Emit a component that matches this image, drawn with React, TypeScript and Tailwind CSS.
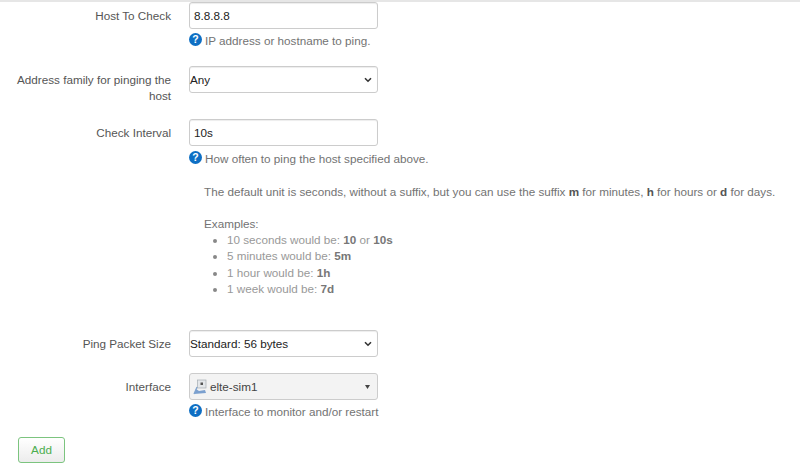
const font = "font-['Liberation_Sans',Arial,sans-serif]";

function Help({ children, className = "" }: { children: React.ReactNode; className?: string }) {
  return (
    <div className={"text-[11.7px] leading-[16.5px] text-[#737373] " + className}>
      <span className="inline-flex align-[-1px] mr-[3px]">
        <svg width="13" height="13" viewBox="0 0 13 13">
          <circle cx="6.5" cy="6.5" r="6.5" fill="#0e6fc4" />
          <text x="6.5" y="10.2" textAnchor="middle" fontSize="10.5" fontWeight="700" fill="#fff" fontFamily="Liberation Sans">?</text>
        </svg>
      </span>
      {children}
    </div>
  );
}

function Label({ children }: { children: React.ReactNode }) {
  return (
    <label className="w-[171px] shrink-0 text-right text-[11.7px] leading-[16.5px] text-[#555] pt-[6px] pl-[10px]">
      {children}
    </label>
  );
}

function TextBox({ value }: { value: string }) {
  return (
    <input
      readOnly
      value={value}
      className="block w-[189px] h-[27px] px-[4px] bg-white border border-[#ccc] rounded-[3px] text-[11.7px] text-[#222] shadow-[inset_0_1px_1px_rgba(0,0,0,0.075)] outline-none"
    />
  );
}

function Select({ value }: { value: string }) {
  return (
    <div className="relative w-[189px] h-[27px] bg-white border border-[#ccc] rounded-[3px] shadow-[inset_0_1px_1px_rgba(0,0,0,0.075)] text-[11.7px] leading-[25px] text-[#222]">
      {value}
      <svg className="absolute right-[5px] top-[10px]" width="8" height="6" viewBox="0 0 8 6" fill="none">
        <path d="M1 1.2 L4 4.2 L7 1.2" stroke="#333" strokeWidth="1.6" />
      </svg>
    </div>
  );
}

export default function App() {
  return (
    <div className={"w-[800px] h-[471px] overflow-hidden bg-white border-t-2 border-[#e6e6e6] " + font}>
      <div className="flex gap-[18px]">
        <Label>Host To Check</Label>
        <div>
          <TextBox value="8.8.8.8" />
          <Help className="mt-[4px]">IP address or hostname to ping.</Help>
        </div>
      </div>

      <div className="flex gap-[18px] mt-[16px]">
        <Label>Address family for pinging the host</Label>
        <Select value="Any" />
      </div>

      <div className="flex gap-[18px] mt-[14px]">
        <Label>Check Interval</Label>
        <div>
          <TextBox value="10s" />
          <Help className="mt-[5px]">How often to ping the host specified above.</Help>
          <div className="pl-[15px] text-[11.7px] leading-[16.4px] text-[#737373] whitespace-nowrap">
            <p className="mt-[17px]">
              The default unit is seconds, without a suffix, but you can use the suffix <b className="text-[#555]">m</b> for minutes, <b className="text-[#555]">h</b> for hours or <b className="text-[#555]">d</b> for days.
            </p>
            <p className="mt-[16px]">Examples:</p>
            <ul className="list-disc pl-[23px] -mt-[1px] text-[#999] marker:text-[#888]">
              <li>10 seconds would be: <b className="text-[#777]">10</b> or <b className="text-[#777]">10s</b></li>
              <li>5 minutes would be: <b className="text-[#777]">5m</b></li>
              <li>1 hour would be: <b className="text-[#777]">1h</b></li>
              <li>1 week would be: <b className="text-[#777]">7d</b></li>
            </ul>
          </div>
        </div>
      </div>

      <div className="flex gap-[18px] mt-[33px]">
        <Label>Ping Packet Size</Label>
        <Select value="Standard: 56 bytes" />
      </div>

      <div className="flex gap-[18px] mt-[16px]">
        <Label>Interface</Label>
        <div>
          <div className="relative flex items-center w-[189px] h-[27px] bg-[#f3f3f3] border border-[#ccc] rounded-[3px] text-[11.7px] text-[#444]">
            <svg className="ml-[3px] mr-[3px]" width="14" height="16" viewBox="0 0 14 16">
              <rect x="4.5" y="1" width="8.5" height="8" fill="#e4e7ea" stroke="#a5adb3" strokeWidth="0.7" />
              <rect x="7.5" y="3.5" width="2.5" height="2.5" fill="#555" />
              <path d="M1 15 L3 10 L6 12 L12 11 L13 14 Z" fill="#7ba0cf" />
              <path d="M1 15 L4 8" stroke="#7fa3cf" strokeWidth="1.2" />
            </svg>
            elte-sim1
            <svg className="absolute right-[7px] top-[11px]" width="5" height="4" viewBox="0 0 5 4">
              <path d="M0 0 H5 L2.5 4 Z" fill="#444" />
            </svg>
          </div>
          <Help className="mt-[4px]">Interface to monitor and/or restart</Help>
        </div>
      </div>

      <button className="block ml-[18px] mt-[16px] w-[47px] h-[26px] rounded-[3px] border border-[#7cc47f] bg-linear-to-b from-white to-[#ececec] text-[11.7px] text-[#4cae4f]">
        Add
      </button>
    </div>
  );
}
